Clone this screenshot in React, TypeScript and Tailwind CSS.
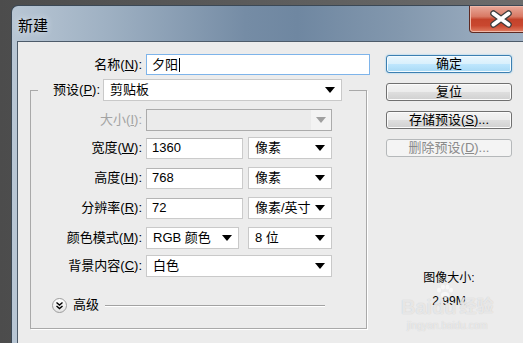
import React from "react";

const Tri = ({ color = "#000" }: { color?: string }) => (
  <svg width="10" height="6" viewBox="0 0 10 6" className="flex-none">
    <path d="M0 0h10L5 6z" fill={color} />
  </svg>
);

function Select({ w, value }: { w: string; value: string }) {
  return (
    <div className={`${w} h-[22px] flex items-center justify-between bg-white border border-[#c9c9c9] pl-[6px] pr-[6px]`}>
      <span>{value}</span>
      <Tri />
    </div>
  );
}

function Input({ w, value }: { w: string; value: string }) {
  return (
    <div className={`${w} h-[21px] flex items-center bg-white border border-[#cbcbcb] border-t-[#b4b4b4] pl-[5px]`}>
      {value}
    </div>
  );
}

function Label({ text, k, w, dim }: { text: string; k: string; w: string; dim?: boolean }) {
  return (
    <span className={`${w} flex-none text-right ${dim ? "text-[#a3a3a3]" : "text-black"}`}>
      {text}(<u className="underline-offset-1">{k}</u>):
    </span>
  );
}

function Btn({ children, kind = "normal" }: { children: React.ReactNode; kind?: "normal" | "default" | "disabled" }) {
  const styles = {
    normal:
      "border-[#707070] bg-[linear-gradient(#f3f3f3,#ececec_48%,#dedede_52%,#d0d0d0)] shadow-[inset_0_0_0_1px_#fbfbfb] text-black",
    default:
      "border-[#3c7fb1] bg-[linear-gradient(#eaf6fd,#d9f0fc_48%,#bee6fd_52%,#a7d9f5)] shadow-[inset_0_0_0_1px_#f4fbff,0_0_2px_#7fc4ee] text-black",
    disabled: "border-[#b5b8ba] bg-[#f4f4f4] text-[#8a8a8a]",
  };
  return (
    <div className={`w-[126px] h-[18px] flex items-center justify-center border rounded-[3px] leading-[16px] ${styles[kind]}`}>
      {children}
    </div>
  );
}

export default function App() {
  return (
    <div className="relative w-[523px] h-[343px] overflow-hidden bg-[linear-gradient(90deg,#4c4c4c,#6c6c6c)] font-['Liberation_Sans','Noto_Sans_CJK_SC',sans-serif] text-[13px] leading-[16px]">
      {/* window */}
      <div className="ml-[11px] mt-[5px] w-[520px] h-[338px] flex flex-col rounded-tl-[7px] border-l border-t border-[#3b4855] bg-[linear-gradient(90deg,#b8c6d4_0%,#9fb1c3_18%,#758ca5_45%,#6f87a1_55%,#8398ae_75%,#a3b4c6_100%)] pl-[5px]">
        {/* title bar */}
        <div className="h-[35px] flex items-start flex-none">
          <span className="mt-[11px] ml-[1px] text-[15px] leading-[18px] text-black [text-shadow:0_0_6px_#e8eef4]">新建</span>
          <div className="ml-auto w-[62px] h-[27px] flex items-center justify-center border border-[#5e2a22] border-t-0 rounded-bl-[4px] bg-[linear-gradient(#e8a99a,#d97a65_40%,#c4432b_52%,#c9472f_75%,#e07e63)] shadow-[inset_0_0_0_1px_#f0b8a8]">
            <svg width="24" height="18" viewBox="0 0 24 18" className="ml-[2px]">
              <path d="M4.5 3.5l15 11M19.5 3.5l-15 11" stroke="#3d3d3d" strokeWidth="6.5" strokeLinecap="round" />
              <path d="M4.5 3.5l15 11M19.5 3.5l-15 11" stroke="#ffffff" strokeWidth="4" strokeLinecap="round" />
            </svg>
          </div>
        </div>

        {/* client area */}
        <div className="flex-1 flex bg-[#ececec] border-t border-l border-[#4d5b6a] pt-[12px]">
          {/* left column */}
          <div className="w-[352px] flex-none flex flex-col">
            <div className="flex items-center h-[21px]">
              <Label text="名称" k="N" w="w-[124px]" />
              <div className="ml-[4px] w-[224px] h-[21px] flex items-center bg-white border border-[#7eb4ea] pl-[5px]">
                夕阳<span className="ml-[1px] w-px h-[14px] bg-black" />
              </div>
            </div>

            <fieldset className="mt-[4px] ml-[12px] w-[337px] border border-[#a9a9a9] shadow-[1px_1px_0_#ffffff]">
              <legend className="ml-[7px] pr-[7px] flex items-center">
                <Label text="预设" k="P" w="w-[62px]" />
                <div className="ml-[3px]">
                  <Select w="w-[239px]" value="剪贴板" />
                </div>
              </legend>

              <div className="flex flex-col">
                <div className="mt-[8px] flex items-center h-[22px]">
                  <Label text="大小" k="I" w="w-[111px]" dim />
                  <div className="ml-[4px] w-[186px] h-[22px] flex items-center justify-end bg-[#ebebeb] border border-[#ababab]">
                    <div className="w-[20px] h-full flex items-center justify-center bg-[#f3f3f3]">
                      <Tri color="#a0a0a0" />
                    </div>
                  </div>
                </div>

                <div className="mt-[6px] flex items-center h-[22px]">
                  <Label text="宽度" k="W" w="w-[111px]" />
                  <div className="ml-[4px]"><Input w="w-[97px]" value="1360" /></div>
                  <div className="ml-[5px]"><Select w="w-[84px]" value="像素" /></div>
                </div>

                <div className="mt-[8px] flex items-center h-[22px]">
                  <Label text="高度" k="H" w="w-[111px]" />
                  <div className="ml-[4px]"><Input w="w-[97px]" value="768" /></div>
                  <div className="ml-[5px]"><Select w="w-[84px]" value="像素" /></div>
                </div>

                <div className="mt-[8px] flex items-center h-[22px]">
                  <Label text="分辨率" k="R" w="w-[111px]" />
                  <div className="ml-[4px]"><Input w="w-[97px]" value="72" /></div>
                  <div className="ml-[5px]"><Select w="w-[84px]" value="像素/英寸" /></div>
                </div>

                <div className="mt-[8px] flex items-center h-[22px]">
                  <Label text="颜色模式" k="M" w="w-[111px]" />
                  <div className="ml-[4px]"><Select w="w-[93px]" value="RGB 颜色" /></div>
                  <div className="ml-[9px]"><Select w="w-[84px]" value="8 位" /></div>
                </div>

                <div className="mt-[6px] flex items-center h-[22px]">
                  <Label text="背景内容" k="C" w="w-[111px]" />
                  <div className="ml-[4px]"><Select w="w-[186px]" value="白色" /></div>
                </div>

                <div className="mt-[20px] mb-[15px] flex items-center h-[16px]">
                  <div className="ml-[21px] w-[15px] h-[15px] flex items-center justify-center rounded-full border border-[#9c9c9c] bg-[linear-gradient(#ffffff,#e4e4e4)]">
                    <svg width="9" height="9" viewBox="0 0 9 9">
                      <path d="M1.5 1.5l3 2.5 3-2.5M1.5 5l3 2.5 3-2.5" stroke="#000" strokeWidth="1.4" fill="none" />
                    </svg>
                  </div>
                  <span className="ml-[6px]">高级</span>
                  <div className="ml-[6px] w-[220px] h-px bg-[#a2a2a2] shadow-[0_1px_0_#ffffff]" />
                </div>
              </div>
            </fieldset>
          </div>

          {/* right column */}
          <div className="ml-[16px] w-[126px] flex-none flex flex-col">
            <div className="mt-[1px] flex flex-col gap-[10px]">
              <Btn kind="default">确定</Btn>
              <Btn>复位</Btn>
              <Btn>
                存储预设(<u>S</u>)...
              </Btn>
              <Btn kind="disabled">
                删除预设(<u>D</u>)...
              </Btn>
            </div>
            <div className="mt-[114px] text-center text-[12px] leading-[14px] text-black">图像大小:</div>
            <div className="mt-[9px] text-center text-[12px] leading-[14px] text-black">2.99M</div>
          </div>
        </div>
      </div>

      {/* baidu watermark */}
      <div className="absolute left-[401px] top-[297px] flex flex-col items-center text-white/60 [text-shadow:0_0_1px_#c0c0c0]">
        <div className="flex items-end">
          <span className="text-[20px] leading-[20px] font-bold">Bai</span>
          <span className="relative text-[20px] leading-[20px] font-bold">
            du
            <svg className="absolute left-[3px] -top-[13px]" width="20" height="14" viewBox="0 0 20 14">
              <g fill="#ffffff" fillOpacity="0.6">
                <ellipse cx="4" cy="6" rx="2" ry="2.5" />
                <ellipse cx="8" cy="3" rx="2" ry="2.5" />
                <ellipse cx="12.5" cy="3" rx="2" ry="2.5" />
                <ellipse cx="16" cy="6" rx="2" ry="2.5" />
                <ellipse cx="10" cy="11" rx="4" ry="3" />
              </g>
            </svg>
          </span>
          <span className="ml-[3px] text-[17px] leading-[20px] font-bold">经验</span>
        </div>
        <span className="mt-[3px] text-[10px] leading-[11px]">jingyan.baidu.com</span>
      </div>
    </div>
  );
}
